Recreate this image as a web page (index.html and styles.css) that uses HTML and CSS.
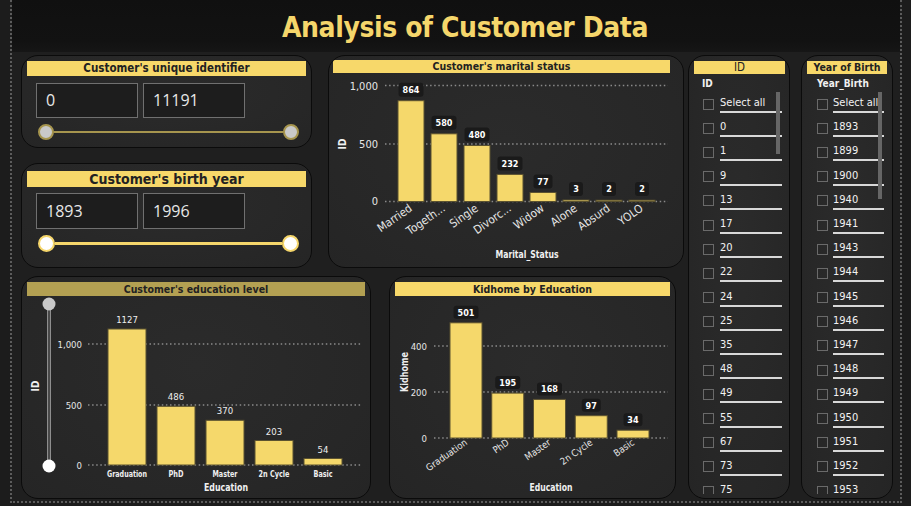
FILE: index.html
```html
<!DOCTYPE html>
<html lang="en">
<head>
<meta charset="utf-8">
<title>Analysis of Customer Data</title>
<link rel="stylesheet" href="styles.css">
</head>
<body>
<div class="frame">
  <header class="titlebar"><h1>Analysis of Customer Data</h1></header>
  <main class="content">
    <div class="left">
      <div class="row top">
        <div class="col">
          <section class="card range r1">
            <h2 class="hdr">Customer's unique identifier</h2>
            <div class="inputs"><div class="box">0</div><div class="box">11191</div></div>
            <div class="slider"><span class="thumb"></span><span class="track"></span><span class="thumb"></span></div>
          </section>
          <section class="card range r2">
            <h2 class="hdr">Customer's birth year</h2>
            <div class="inputs"><div class="box">1893</div><div class="box">1996</div></div>
            <div class="slider"><span class="thumb"></span><span class="track"></span><span class="thumb"></span></div>
          </section>
        </div>
        <section class="card chart marital">
          <h2 class="hdr">Customer's marital status</h2>
          <svg class="plot" width="354" height="194" viewBox="1 0 354 194">
            <g class="ylab">
              <text x="50" y="16.5">1,000</text><text x="50" y="75">500</text><text x="50" y="132">0</text>
            </g>
            <g class="grid">
              <line x1="57" y1="12.5" x2="340" y2="12.5"/><line x1="57" y1="71" x2="340" y2="71"/><line x1="57" y1="128.5" x2="340" y2="128.5"/>
            </g>
            <g class="bars">
              <rect x="70" y="27.7" width="26" height="100.8"/>
              <rect x="103" y="60.8" width="26" height="67.7"/>
              <rect x="136" y="72.5" width="26" height="56"/>
              <rect x="169" y="101.4" width="26" height="27.1"/>
              <rect x="202" y="119.5" width="26" height="9"/>
              <rect x="235" y="127" width="26" height="1.5"/>
              <rect x="268" y="127.2" width="26" height="1.3"/>
              <rect x="301" y="127.2" width="26" height="1.3"/>
            </g>
            <g class="vbox">
              <rect x="70.5" y="9.7" width="25" height="14" rx="3"/>
              <rect x="103.5" y="42.8" width="25" height="14" rx="3"/>
              <rect x="136.5" y="54.5" width="25" height="14" rx="3"/>
              <rect x="169.5" y="83.4" width="25" height="14" rx="3"/>
              <rect x="205.5" y="101.5" width="19" height="14" rx="3"/>
              <rect x="241" y="109" width="14" height="14" rx="3"/>
              <rect x="274" y="109" width="14" height="14" rx="3"/>
              <rect x="307" y="109" width="14" height="14" rx="3"/>
            </g>
            <g class="vtext">
              <text x="83" y="20">864</text><text x="116" y="53.1">580</text><text x="149" y="64.8">480</text><text x="182" y="93.7">232</text>
              <text x="215" y="111.8">77</text><text x="248" y="119.3">3</text><text x="281" y="119.3">2</text><text x="314" y="119.3">2</text>
            </g>
            <g class="xrot">
              <text transform="translate(85 137) rotate(-35)">Married</text>
              <text transform="translate(118 137) rotate(-35)">Togeth...</text>
              <text transform="translate(151 137) rotate(-35)">Single</text>
              <text transform="translate(184 137) rotate(-35)">Divorc...</text>
              <text transform="translate(217 137) rotate(-35)">Widow</text>
              <text transform="translate(250 137) rotate(-35)">Alone</text>
              <text transform="translate(283 137) rotate(-35)">Absurd</text>
              <text transform="translate(316 137) rotate(-35)">YOLO</text>
            </g>
            <text class="atitle" x="199" y="184.5" textLength="63" lengthAdjust="spacingAndGlyphs">Marital_Status</text>
            <text class="atitle" transform="translate(18 71) rotate(-90)">ID</text>
          </svg>
        </section>
      </div>
      <div class="row bottom">
        <section class="card chart edu">
          <h2 class="hdr khaki">Customer's education level</h2>
          <svg class="plot" width="348" height="202" viewBox="1 0 348 202">
            <defs>
              <linearGradient id="gradTop" x1="0" y1="0" x2="0" y2="1">
                <stop offset="0" stop-color="#ad994c"/>
                <stop offset="0.1" stop-color="#b7a252"/>
                <stop offset="0.22" stop-color="#eccf66"/>
                <stop offset="1" stop-color="#f5d86b"/>
              </linearGradient>
            </defs>
            <rect class="vtrack" x="26.5" y="8" width="3" height="162"/>
            <circle class="vthumb1" cx="28" cy="8" r="6.5"/>
            <circle class="vthumb2" cx="28" cy="170" r="6.5"/>
            <g class="ylab small">
              <text x="61" y="51.5">1,000</text><text x="61" y="112.5">500</text><text x="61" y="172.5">0</text>
            </g>
            <g class="grid">
              <line x1="67" y1="48" x2="341" y2="48"/><line x1="67" y1="109" x2="341" y2="109"/><line x1="67" y1="169" x2="341" y2="169"/>
            </g>
            <g class="bars">
              <rect x="87" y="33" width="38" height="136" fill="url(#gradTop)"/>
              <rect x="136" y="110.3" width="38" height="58.7"/>
              <rect x="185" y="124.3" width="38" height="44.7"/>
              <rect x="234" y="144.5" width="38" height="24.5"/>
              <rect x="283" y="162.5" width="38" height="6.5"/>
            </g>
            <g class="ptext">
              <text x="106" y="27">1127</text><text x="155" y="104.3">486</text><text x="204" y="118.3">370</text><text x="253" y="138.5">203</text><text x="302" y="156.5">54</text>
            </g>
            <g class="xlab">
              <text x="106" y="180.5" textLength="40" lengthAdjust="spacingAndGlyphs">Graduation</text>
              <text x="155" y="180.5" textLength="15" lengthAdjust="spacingAndGlyphs">PhD</text>
              <text x="204" y="180.5" textLength="25" lengthAdjust="spacingAndGlyphs">Master</text>
              <text x="253" y="180.5" textLength="31" lengthAdjust="spacingAndGlyphs">2n Cycle</text>
              <text x="302" y="180.5" textLength="19" lengthAdjust="spacingAndGlyphs">Basic</text>
            </g>
            <text class="atitle big" x="205" y="195" textLength="44" lengthAdjust="spacingAndGlyphs">Education</text>
            <text class="atitle" transform="translate(18 90) rotate(-90)">ID</text>
          </svg>
        </section>
        <section class="card chart kid">
          <h2 class="hdr">Kidhome by Education</h2>
          <svg class="plot" width="285" height="202" viewBox="1 0 285 202">
            <g class="ylab small">
              <text x="38" y="53.5">400</text><text x="38" y="99.5">200</text><text x="38" y="145.5">0</text>
            </g>
            <g class="grid">
              <line x1="45" y1="50" x2="279" y2="50"/><line x1="45" y1="96" x2="279" y2="96"/><line x1="45" y1="142" x2="279" y2="142"/>
            </g>
            <g class="bars">
              <rect x="61" y="26.8" width="32" height="115.2"/>
              <rect x="102.75" y="97.1" width="32" height="44.9"/>
              <rect x="144.5" y="103.4" width="32" height="38.6"/>
              <rect x="186.25" y="119.7" width="32" height="22.3"/>
              <rect x="228" y="134.2" width="32" height="7.8"/>
            </g>
            <g class="vbox">
              <rect x="64.5" y="9.8" width="25" height="13" rx="3"/>
              <rect x="106.25" y="80.1" width="25" height="13" rx="3"/>
              <rect x="148" y="86.4" width="25" height="13" rx="3"/>
              <rect x="192.75" y="102.7" width="19" height="13" rx="3"/>
              <rect x="234.5" y="117.2" width="19" height="13" rx="3"/>
            </g>
            <g class="vtext">
              <text x="77" y="19.6">501</text><text x="118.75" y="89.9">195</text><text x="160.5" y="96.2">168</text><text x="202.25" y="112.5">97</text><text x="244" y="127">34</text>
            </g>
            <g class="xrot small">
              <text transform="translate(79 148) rotate(-35)">Graduation</text>
              <text transform="translate(120.75 148) rotate(-35)">PhD</text>
              <text transform="translate(162.5 148) rotate(-35)">Master</text>
              <text transform="translate(204.25 148) rotate(-35)">2n Cycle</text>
              <text transform="translate(246 148) rotate(-35)">Basic</text>
            </g>
            <text class="atitle big" x="162" y="194.5" textLength="43" lengthAdjust="spacingAndGlyphs">Education</text>
            <text class="atitle big" transform="translate(19 76) rotate(-90)" textLength="40" lengthAdjust="spacingAndGlyphs">Kidhome</text>
          </svg>
        </section>
      </div>
    </div>
    <section class="card slicer sid">
      <h2 class="hdr plain">ID</h2>
      <div class="sub">ID</div>
      <div class="list">
        <div class="item"><span class="cb"></span><span class="lbl">Select all</span></div>
        <div class="item"><span class="cb"></span><span class="lbl">0</span></div>
        <div class="item"><span class="cb"></span><span class="lbl">1</span></div>
        <div class="item"><span class="cb"></span><span class="lbl">9</span></div>
        <div class="item"><span class="cb"></span><span class="lbl">13</span></div>
        <div class="item"><span class="cb"></span><span class="lbl">17</span></div>
        <div class="item"><span class="cb"></span><span class="lbl">20</span></div>
        <div class="item"><span class="cb"></span><span class="lbl">22</span></div>
        <div class="item"><span class="cb"></span><span class="lbl">24</span></div>
        <div class="item"><span class="cb"></span><span class="lbl">25</span></div>
        <div class="item"><span class="cb"></span><span class="lbl">35</span></div>
        <div class="item"><span class="cb"></span><span class="lbl">48</span></div>
        <div class="item"><span class="cb"></span><span class="lbl">49</span></div>
        <div class="item"><span class="cb"></span><span class="lbl">55</span></div>
        <div class="item"><span class="cb"></span><span class="lbl">67</span></div>
        <div class="item"><span class="cb"></span><span class="lbl">73</span></div>
        <div class="item"><span class="cb"></span><span class="lbl">75</span></div>
        <span class="scroll"></span>
      </div>
    </section>
    <section class="card slicer syob">
      <h2 class="hdr">Year of Birth</h2>
      <div class="sub">Year_Birth</div>
      <div class="list">
        <div class="item"><span class="cb"></span><span class="lbl">Select all</span></div>
        <div class="item"><span class="cb"></span><span class="lbl">1893</span></div>
        <div class="item"><span class="cb"></span><span class="lbl">1899</span></div>
        <div class="item"><span class="cb"></span><span class="lbl">1900</span></div>
        <div class="item"><span class="cb"></span><span class="lbl">1940</span></div>
        <div class="item"><span class="cb"></span><span class="lbl">1941</span></div>
        <div class="item"><span class="cb"></span><span class="lbl">1943</span></div>
        <div class="item"><span class="cb"></span><span class="lbl">1944</span></div>
        <div class="item"><span class="cb"></span><span class="lbl">1945</span></div>
        <div class="item"><span class="cb"></span><span class="lbl">1946</span></div>
        <div class="item"><span class="cb"></span><span class="lbl">1947</span></div>
        <div class="item"><span class="cb"></span><span class="lbl">1948</span></div>
        <div class="item"><span class="cb"></span><span class="lbl">1949</span></div>
        <div class="item"><span class="cb"></span><span class="lbl">1950</span></div>
        <div class="item"><span class="cb"></span><span class="lbl">1951</span></div>
        <div class="item"><span class="cb"></span><span class="lbl">1952</span></div>
        <div class="item"><span class="cb"></span><span class="lbl">1953</span></div>
        <span class="scroll"></span>
      </div>
    </section>
  </main>
</div>
</body>
</html>
```

FILE: styles.css
```css
* { box-sizing: border-box; }
html, body { margin: 0; padding: 0; }
body {
  width: 911px; height: 506px; overflow: hidden;
  background: #1c1c1c;
  font-family: "DejaVu Sans Condensed", "DejaVu Sans", Roboto, sans-serif;
  font-stretch: condensed;
  color: #eee;
}
.frame {
  margin-left: 10px;
  width: 892px; height: 503px;
  border-left: 2px dotted #5c5c5c;
  border-right: 2px dotted #5c5c5c;
  border-bottom: 2px dotted #5c5c5c;
  background: #1f1f1f;
  overflow: hidden;
  display: flex; flex-direction: column;
}
.titlebar {
  height: 52px; flex: none;
  background: linear-gradient(#101010 0, #121212 80%, #161616 100%);
  display: flex; align-items: center; justify-content: center;
  padding: 3px 0 0 18px;
}
.titlebar h1 {
  margin: 0; font-size: 28px; font-weight: bold; color: #f5d66b;
  letter-spacing: -0.4px;
}
.content { flex: 1; display: flex; padding: 3px 0 0 9px; min-height: 0; }
.left { width: 663px; display: flex; flex-direction: column; gap: 8px; }
.row { display: flex; }
.row.top { height: 213px; gap: 16px; }
.row.bottom { height: 223px; gap: 18px; }
.col { width: 291px; display: flex; flex-direction: column; gap: 15px; }

.card {
  background: radial-gradient(ellipse at 50% 40%, #2b2b2b 0, #272727 70%, #252525 100%);
  border: 1px solid #0b0b0b;
  border-radius: 17px;
  position: relative;
  overflow: hidden;
}
.hdr {
  margin: 0; background: #f7d86a; color: #222;
  font-size: 12px; font-weight: bold; text-align: center;
  height: 15px; line-height: 15px;
}
.hdr.khaki { background: #b3a052; }

.range.r1 { height: 93px; padding: 5px 5px 0 5px; }
.range.r2 { height: 105px; padding: 7px 5px 0 5px; }
.r1 .hdr { font-size: 11.5px; }
.r2 .hdr { height: 16px; line-height: 16px; font-size: 14px; }
.inputs { display: flex; gap: 5px; margin: 7px 0 0 9px; }
.r2 .inputs { margin-top: 6px; }
.box {
  width: 102px; height: 35px;
  border: 1px solid #707070; background: #1d1d1d;
  font-family: "Open Sans", "DejaVu Sans", sans-serif; font-stretch: normal;
  font-size: 16px; line-height: 33px; padding-left: 9px; color: #e8e8e8;
}
.r2 .box { height: 36px; line-height: 34px; }
.slider { display: flex; align-items: center; height: 16px; margin: 6px 7px 0 11px; }
.r2 .slider { height: 17px; }
.thumb { width: 16px; height: 16px; border-radius: 50%; flex: none; background: #c9c9c9; border: 2px solid #a6954e; }
.track { flex: 1; height: 2px; background: #a6954e; }
.r2 .thumb { width: 17px; height: 17px; background: #fff; border-color: #f5d66b; }
.r2 .track { height: 3px; background: #f5d66b; }

.chart.marital { width: 356px; }
.marital .hdr { margin: 4px 13px 0 4px; height: 13px; line-height: 13px; font-size: 10.5px; }
.chart.edu { width: 350px; }
.chart.kid { width: 287px; }
.edu .hdr, .kid .hdr { margin: 5px 5px 0 5px; height: 14px; line-height: 14px; font-size: 10.5px; }
.plot { display: block; }
.plot text { font-family: "DejaVu Sans Condensed", "DejaVu Sans", Roboto, sans-serif; font-stretch: condensed; }
.ylab text { fill: #e6e6e6; font-size: 11px; text-anchor: end; }
.ylab.small text { font-size: 9.5px; }
.grid line { stroke: #8a8a8a; stroke-width: 1.5; stroke-dasharray: 1.5 2.6; }
.bars rect { fill: #f5d86b; stroke: #5b5230; stroke-width: 1; }
.vbox rect { fill: #1a1a1a; }
.vtext text { fill: #fff; font-size: 9px; font-weight: bold; text-anchor: middle; }
.ptext text { fill: #eee; font-size: 9.5px; text-anchor: middle; }
.xrot text { fill: #e6e6e6; font-size: 11.5px; text-anchor: end; }
.xrot.small text { font-size: 9.5px; }
.xlab text { fill: #f0f0f0; font-size: 9.5px; font-weight: bold; text-anchor: middle; }
.atitle { fill: #f0f0f0; font-size: 10px; font-weight: bold; text-anchor: middle; }
.atitle.big { font-size: 11px; }
.vtrack { fill: #4a4a4a; stroke: #8e8e8e; stroke-width: 1; }
.vthumb1 { fill: #c8c8c8; }
.vthumb2 { fill: #fff; }

.slicer { height: 444px; }
.slicer.sid { width: 102px; margin-left: 4px; }
.slicer.syob { width: 92px; margin-left: 11px; }
.slicer .hdr { margin: 5px 4px 0 5px; height: 13px; line-height: 13px; font-weight: normal; font-size: 11.5px; }
.syob .hdr { margin-right: 5px; font-weight: bold; font-size: 10.5px; }
.sub { font-size: 10px; font-weight: bold; color: #f0f0f0; margin: 3px 0 0 13px; height: 14px; line-height: 14px; }
.syob .sub { margin-left: 15px; }
.list { position: relative; margin-top: 1px; height: 402px; overflow: hidden; }
.item { height: 24.2px; display: flex; align-items: center; padding-left: 14px; }
.syob .item { padding-left: 15px; }
.cb { width: 11px; height: 11px; border: 1px solid #6a6a6a; flex: none; }
.lbl {
  margin-left: 6px; width: 62px; height: 18px; line-height: 16px;
  border-bottom: 2px solid #d8d8d8; font-size: 11px; color: #f2f2f2;
  white-space: nowrap; overflow: hidden;
}
.syob .lbl { margin-left: 5px; width: 51px; }
.scroll { position: absolute; top: -3px; width: 4px; background: #666; }
.sid .scroll { left: 87px; height: 65px; }
.syob .scroll { left: 76px; height: 110px; }
```
